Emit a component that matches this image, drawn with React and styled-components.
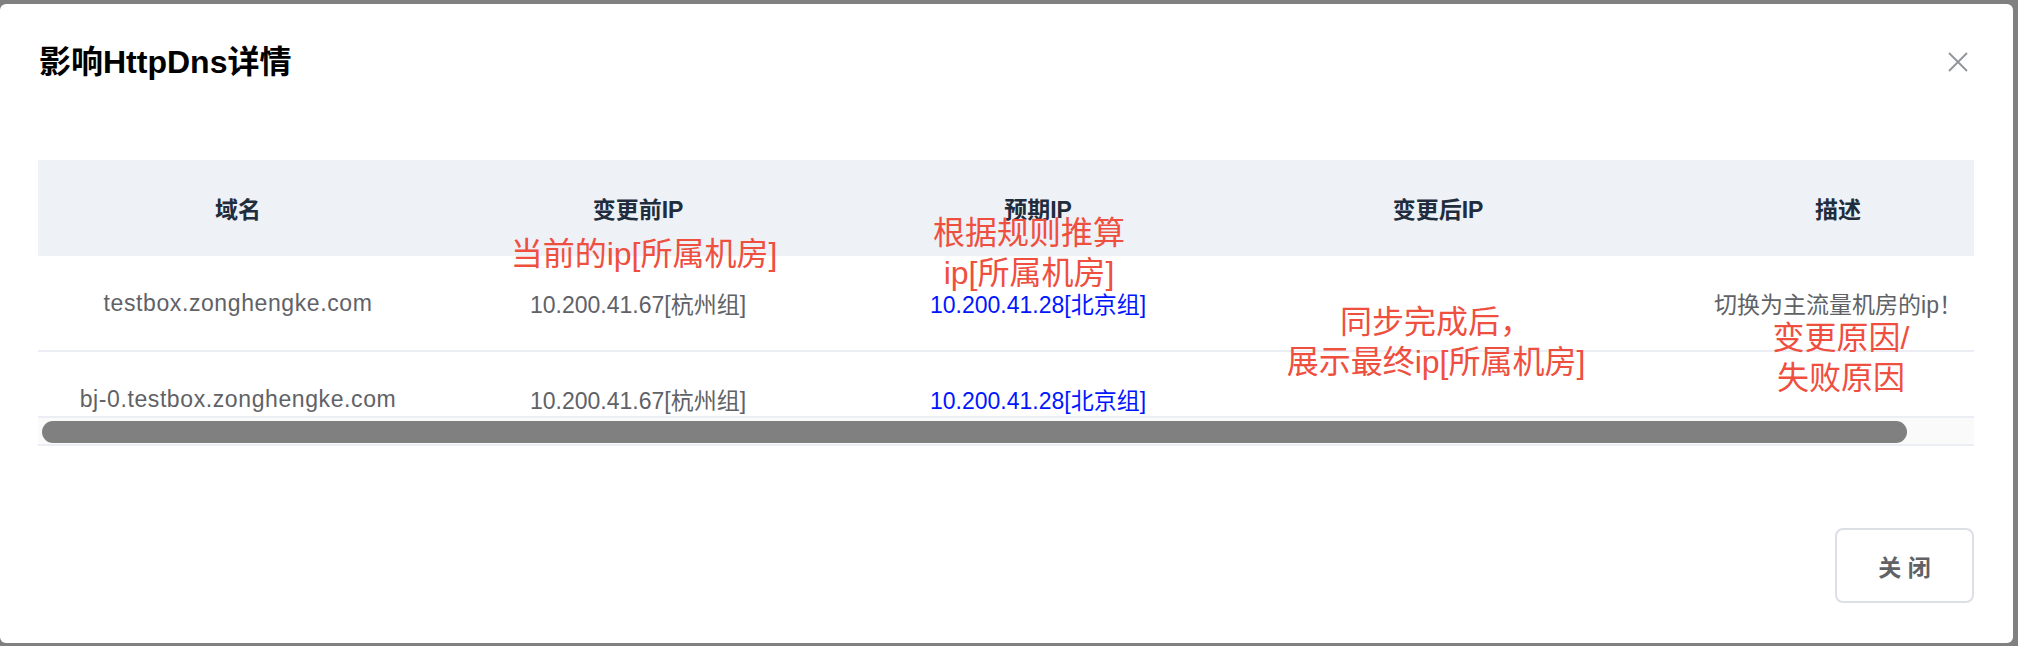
import styled, { createGlobalStyle } from "styled-components"

const GlobalStyle = createGlobalStyle`
html, body {
  margin: 0;
  padding: 0;
  background: #808080;
  overflow: hidden;
}
#root {
  padding-top: 4px;
}
`;

const Dialog = styled.div`
position: relative;
width: 2013px;
height: 639px;
box-sizing: border-box;
background: #fff;
border-radius: 6px;
padding: 38px 39px 40px 38px;
display: flex;
flex-direction: column;
font-family: "Liberation Sans", "Noto Sans CJK SC", sans-serif;
`;

const DialogHeader = styled.div`
display: flex;
align-items: center;
justify-content: space-between;
height: 40px;
padding-left: 1px;
padding-right: 6px;
`;

const Title = styled.h2`
margin: 0;
font-size: 32px;
line-height: 40px;
font-weight: 700;
color: #000;
`;

const CloseIcon = styled.button`
width: 20px;
height: 20px;
padding: 0;
border: none;
background: none;
cursor: pointer;
display: flex;
`;

const TableBox = styled.div`
margin-top: 78px;
width: 1936px;
`;

const Viewport = styled.div`
height: 256px;
overflow: hidden;
border-bottom: 2px solid #ebeef5;
`;

const Row = styled.div`
display: grid;
grid-template-columns: repeat(5, 400px);
width: 2000px;
height: 96px;
box-sizing: border-box;
background: ${p => (p.$head ? "#eef1f6" : "#fff")};
border-bottom: ${p => (p.$head ? "none" : "2px solid #ebeef5")};
`;

const Cell = styled.div`
display: flex;
align-items: center;
justify-content: center;
font-size: 23px;
font-weight: ${p => (p.$head ? 700 : 400)};
color: ${p => (p.$head ? "#1f2d3d" : p.$blue ? "#0016ff" : "#606266")};
white-space: nowrap;
`;

const Domain = styled.span`
letter-spacing: 0.6px;
`;

const ScrollTrack = styled.div`
height: 28px;
box-sizing: border-box;
padding: 3px 4px;
background: #fafafa;
border-bottom: 2px solid #ebeef5;
`;

const ScrollThumb = styled.div`
width: 1865px;
height: 22px;
border-radius: 11px;
background: #808080;
`;

const Footer = styled.div`
margin-top: auto;
display: flex;
justify-content: flex-end;
`;

const CloseButton = styled.button`
width: 139px;
height: 75px;
box-sizing: border-box;
border: 2px solid #dcdfe6;
border-radius: 8px;
background: #fff;
font-family: "Liberation Sans", "Noto Sans CJK SC", sans-serif;
font-size: 23px;
font-weight: 700;
color: #606266;
cursor: pointer;
`;

const Note = styled.div`
position: absolute;
left: ${p => p.$x}px;
top: ${p => p.$y}px;
width: ${p => p.$w}px;
text-align: center;
font-family: "Liberation Sans", "Noto Sans CJK SC", sans-serif;
font-size: 32px;
line-height: 40px;
font-weight: 400;
color: #ef4f3f;
white-space: nowrap;
pointer-events: none;
`;

const columns = ["域名", "变更前IP", "预期IP", "变更后IP", "描述"]

const rows = [
  ["testbox.zonghengke.com", "10.200.41.67[杭州组]", "10.200.41.28[北京组]", "", "切换为主流量机房的ip！"],
  ["bj-0.testbox.zonghengke.com", "10.200.41.67[杭州组]", "10.200.41.28[北京组]", "", ""],
]

const App = () => {
  return (
    <>
      <GlobalStyle />
      <Dialog>
        <DialogHeader>
          <Title>影响HttpDns详情</Title>
          <CloseIcon aria-label="close">
            <svg width="20" height="20" viewBox="0 0 20 20">
              <path d="M1 1L19 19M19 1L1 19" stroke="#909399" strokeWidth="1.8" fill="none" />
            </svg>
          </CloseIcon>
        </DialogHeader>

        <TableBox>
          <Viewport>
            <Row $head>
              {columns.map(c => (
                <Cell $head key={c}>{c}</Cell>
              ))}
            </Row>
            {rows.map((r, i) => (
              <Row key={i}>
                {r.map((v, j) => (
                  <Cell key={j} $blue={j === 2}>
                    {j === 0 ? <Domain>{v}</Domain> : v}
                  </Cell>
                ))}
              </Row>
            ))}
          </Viewport>
          <ScrollTrack>
            <ScrollThumb />
          </ScrollTrack>
        </TableBox>

        <Footer>
          <CloseButton>关 闭</CloseButton>
        </Footer>

        <Note $x={444} $y={230} $w={400}>当前的ip[所属机房]</Note>
        <Note $x={829} $y={209} $w={400}>根据规则推算<br />ip[所属机房]</Note>
        <Note $x={1236} $y={298} $w={400}>同步完成后，<br />展示最终ip[所属机房]</Note>
        <Note $x={1691} $y={314} $w={300}>变更原因/<br />失败原因</Note>
      </Dialog>
    </>
  )
}

export default App
